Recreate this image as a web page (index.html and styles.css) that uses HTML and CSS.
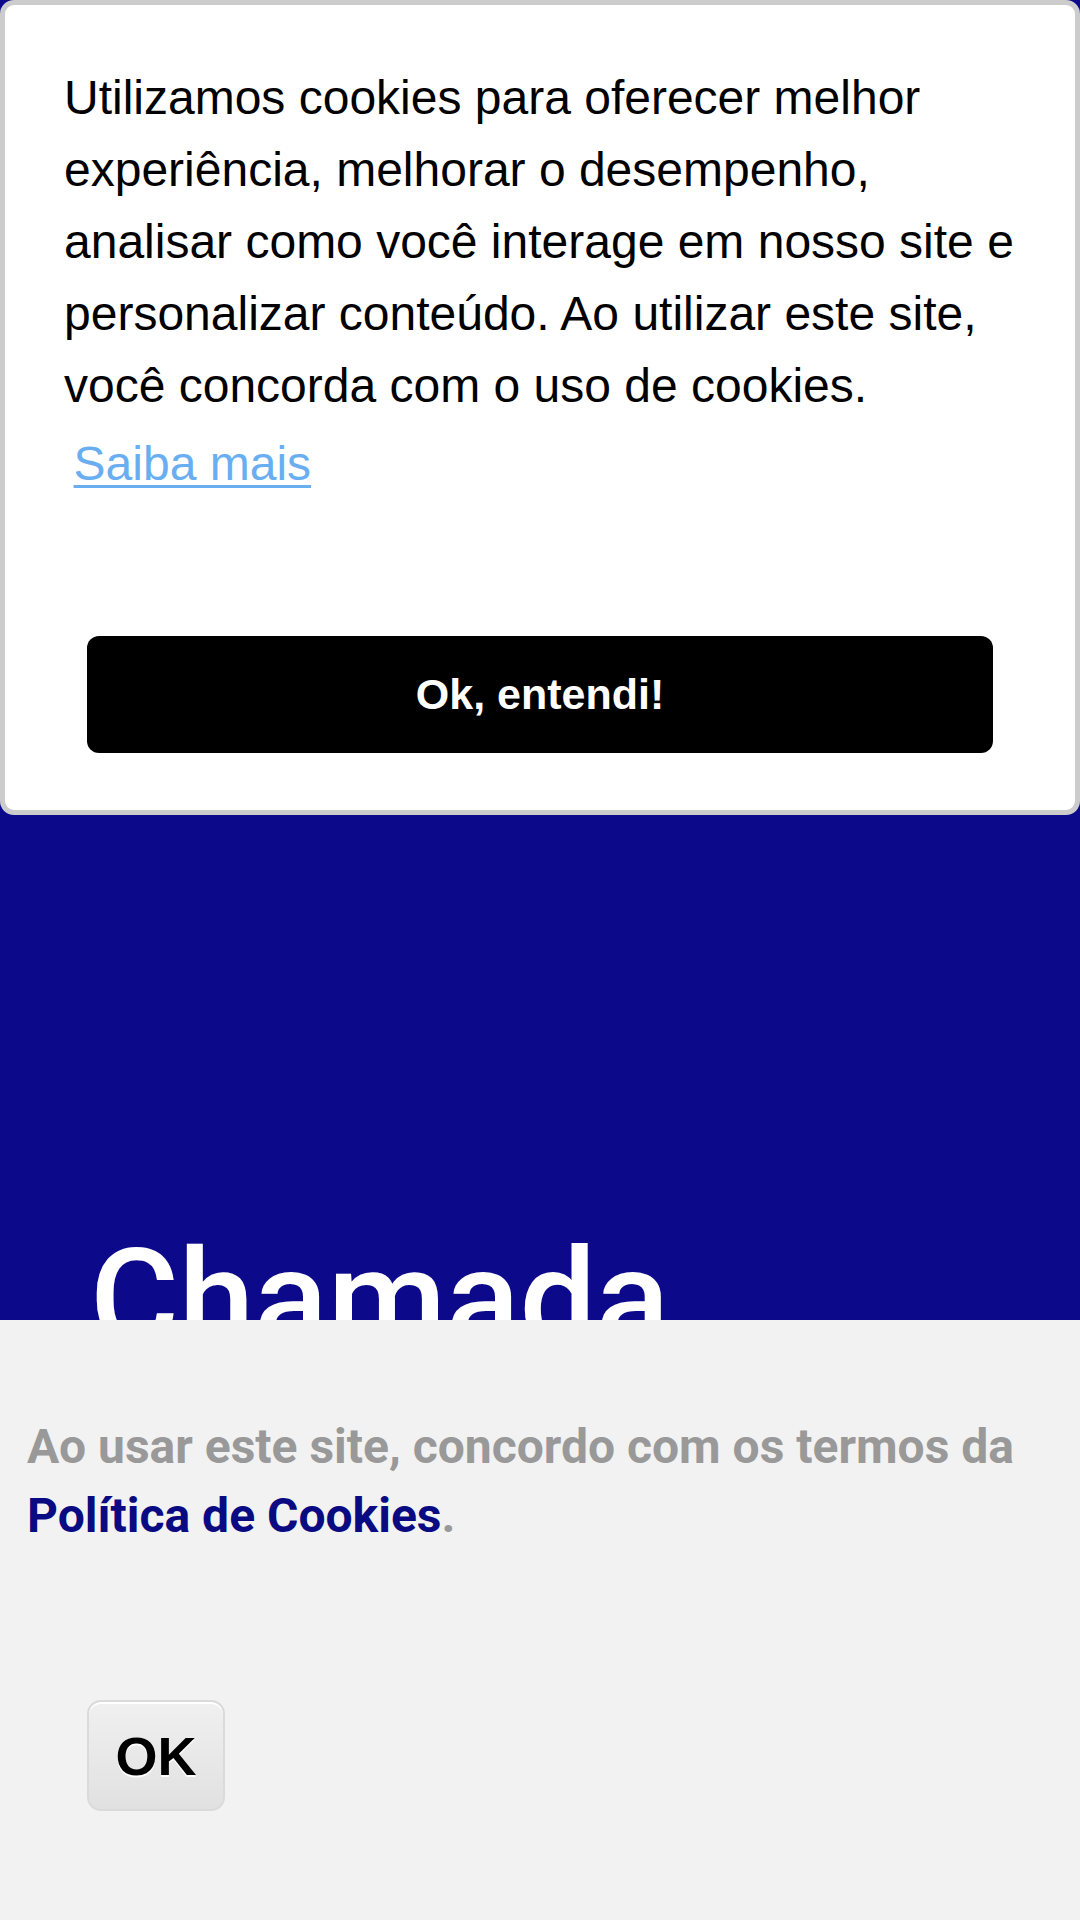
FILE: index.html
```html
<!DOCTYPE html>
<html lang="pt-BR">
<head>
  <meta charset="UTF-8">
  <meta name="viewport" content="width=device-width, initial-scale=1.0">
  <title>Chamada</title>
  <link rel="stylesheet" href="styles.css">
</head>
<body>

<div class="cookie-window">
  <p class="cookie-message">Utilizamos cookies para oferecer melhor experiência, melhorar o desempenho, analisar como você interage em nosso site e personalizar conteúdo. Ao utilizar este site, você concorda com o uso de cookies. <a class="cookie-link" href="#">Saiba mais</a></p>
  <div class="cookie-compliance">
    <a class="cookie-btn" href="#">Ok, entendi!</a>
  </div>
</div>

<section class="hero">
  <h1 class="hero-title">Chamada</h1>
</section>

<div class="policy-bar">
  <p class="policy-text">Ao usar este site, concordo com os termos da <a class="policy-link" href="#">Política de Cookies</a>.</p>
  <button class="policy-ok">OK</button>
</div>

</body>
</html>
```

FILE: styles.css
```css
html, body {
  margin: 0;
  padding: 0;
}

body {
  width: 1080px;
  height: 1920px;
  overflow: hidden;
  background-color: #0c0a8a;
  font-family: "Liberation Sans", Arial, sans-serif;
  position: relative;
}

.cookie-window {
  background-color: #ffffff;
  border: 5px solid #cccccc;
  border-radius: 14px;
  padding: 57px 59px 57px;
  box-sizing: border-box;
  height: 815px;
  display: flex;
  flex-direction: column;
}

.cookie-message {
  margin: 0;
  font-size: 48px;
  line-height: 72px;
  color: #000000;
}

.cookie-link {
  display: inline-block;
  padding: 6px 9.6px;
  color: #6aaef2;
  text-decoration: underline;
  text-underline-offset: 5px;
  text-decoration-thickness: 3px;
}

.cookie-compliance {
  margin-top: auto;
  padding: 0 23px;
}

.cookie-btn {
  display: flex;
  align-items: center;
  justify-content: center;
  height: 117px;
  background-color: #000000;
  color: #ffffff;
  border-radius: 12px;
  font-size: 43px;
  font-weight: 700;
  text-decoration: none;
}

.hero {
  padding: 402px 90px 0;
}

.hero-title {
  margin: 0;
  font-family: Roboto, sans-serif;
  font-weight: 500;
  font-size: 136px;
  line-height: 1.2;
  color: #ffffff;
}

/* bottom consent bar lies over the hero */
.policy-bar {
  position: absolute;
  left: 0;
  right: 0;
  top: 1320px;
  bottom: 0;
  background-color: #f2f2f2;
  padding: 92px 27px 0;
}

.policy-text {
  margin: 0;
  font-family: Roboto, sans-serif;
  font-weight: 700;
  font-size: 48px;
  line-height: 69px;
  color: #999999;
}

.policy-link {
  color: #0a0a82;
  text-decoration: none;
}

.policy-ok {
  display: block;
  margin: 150px 0 0 60px;
  width: 138px;
  height: 111px;
  border: 2px solid #dadada;
  border-radius: 14px;
  background: linear-gradient(#f0f0f0, #e1e1e1);
  font-family: "Liberation Sans", Arial, sans-serif;
  font-size: 54px;
  font-weight: 700;
  color: #000000;
  text-shadow: 0 2px 0 #ffffff;
  box-shadow: inset 0 2px 0 #ffffff;
  padding: 0;
}
```
